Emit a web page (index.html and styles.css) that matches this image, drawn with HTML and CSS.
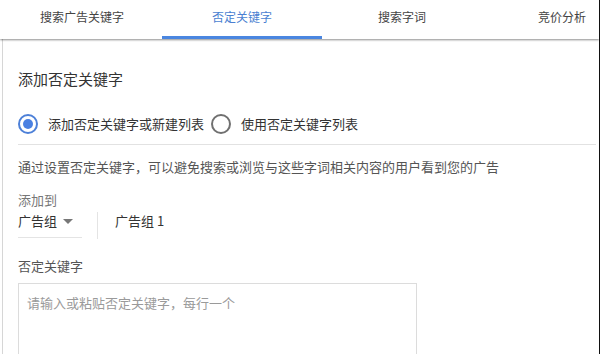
FILE: index.html
```html
<!DOCTYPE html>
<html lang="zh-CN">
<head>
<meta charset="utf-8">
<link rel="stylesheet" href="styles.css">
</head>
<body>
<div class="page">
  <div class="tabs">
    <div class="tab">搜索广告关键字</div>
    <div class="tab active">否定关键字</div>
    <div class="tab">搜索字词</div>
    <div class="tab">竞价分析</div>
  </div>
  <div class="content">
    <div class="title">添加否定关键字</div>
    <div class="radios">
      <span class="radio checked"><span class="dot"></span></span>
      <span class="radio-label">添加否定关键字或新建列表</span>
      <span class="radio"></span>
      <span class="radio-label">使用否定关键字列表</span>
    </div>
    <div class="divider"></div>
    <div class="desc">通过设置否定关键字，可以避免搜索或浏览与这些字词相关内容的用户看到您的广告</div>
    <div class="label">添加到</div>
    <div class="addto">
      <div class="select">广告组<span class="caret"></span></div>
      <div class="vsep"></div>
      <div class="group">广告组 1</div>
    </div>
    <div class="label kw">否定关键字</div>
    <div class="textarea"><span class="placeholder">请输入或粘贴否定关键字，每行一个</span></div>
  </div>
</div>
</body>
</html>
```
FILE: styles.css
```css
html, body {
  margin: 0;
  padding: 0;
  background: #fff;
}
body {
  font-family: "Noto Sans CJK SC", "Noto Sans", sans-serif;
  color: #333;
}
.page {
  width: 599px;
  height: 354px;
  border-right: 1px solid #111;
  overflow: hidden;
  position: relative;
  background: #fff;
}
.tabs {
  height: 39px;
  display: flex;
  padding-left: 2px;
  background: #fff;
  box-shadow: 0 1px 2px rgba(0,0,0,0.45);
  position: relative;
  z-index: 1;
}
.tab {
  width: 160px;
  flex: none;
  box-sizing: border-box;
  text-align: center;
  font-size: 12px;
  line-height: 33px;
  color: #444;
}
.tab.active {
  color: #4b7fd1;
  border-bottom: 3px solid #4a86e0;
}
.content {
  margin-left: 2px;
  margin-right: 3px;
  border-left: 1px solid #d6d6d6;
  padding-left: 15px;
  height: 315px;
  box-sizing: border-box;
}
.title {
  padding-top: 30px;
  font-size: 15px;
  line-height: 20px;
  color: #333;
}
.radios {
  margin-top: 25px;
  height: 20px;
  display: flex;
  align-items: center;
  font-size: 13px;
  color: #333;
}
.radio {
  width: 20px;
  height: 20px;
  box-sizing: border-box;
  border: 2px solid #707070;
  border-radius: 50%;
  display: flex;
  align-items: center;
  justify-content: center;
  flex: none;
}
.radio.checked {
  border-color: #4d80d8;
}
.dot {
  width: 10px;
  height: 10px;
  border-radius: 50%;
  background: #4a80e2;
}
.radio-label {
  margin-left: 10px;
  margin-right: 7px;
  line-height: 20px;
}
.divider {
  margin-top: 10px;
  height: 1px;
  background: #e2e2e2;
}
.desc {
  margin-top: 12px;
  font-size: 13px;
  line-height: 20px;
  color: #555;
}
.label {
  margin-top: 13px;
  font-size: 13px;
  line-height: 20px;
  color: #777;
}
.label.kw {
  margin-top: 17px;
  color: #555;
}
.addto {
  display: flex;
  align-items: flex-start;
  height: 29px;
}
.select {
  width: 64px;
  height: 28px;
  box-sizing: border-box;
  border-bottom: 1px solid #e4e4e4;
  font-size: 13px;
  line-height: 22px;
  color: #333;
  display: flex;
  align-items: center;
  align-self: flex-start;
}
.select {
  align-items: flex-start;
}
.caret {
  margin-left: 6px;
  margin-top: 9px;
  width: 0;
  height: 0;
  border-left: 5px solid transparent;
  border-right: 5px solid transparent;
  border-top: 5px solid #777;
}
.vsep {
  margin-left: 15px;
  margin-top: 2px;
  width: 1px;
  height: 27px;
  background: #e4e4e4;
}
.group {
  margin-left: 17px;
  font-size: 13px;
  line-height: 22px;
  color: #333;
}
.textarea {
  margin-top: 7px;
  width: 399px;
  height: 80px;
  box-sizing: border-box;
  border: 1px solid #dcdcdc;
  padding: 9px 8px 0;
  font-size: 13px;
  line-height: 20px;
}
.placeholder {
  color: #9a9a9a;
}
```
